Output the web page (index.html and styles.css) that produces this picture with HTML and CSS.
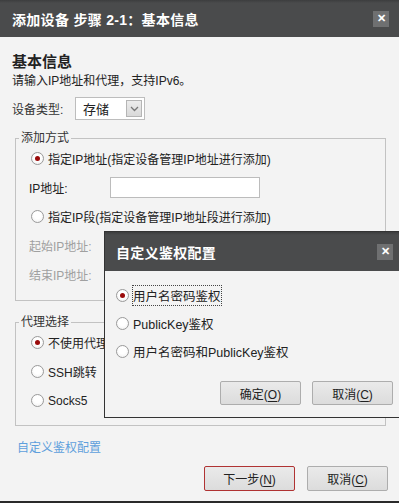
FILE: index.html
```html
<!DOCTYPE html>
<html lang="zh-CN">
<head>
<meta charset="utf-8">
<title>添加设备</title>
<link rel="stylesheet" href="styles.css">
</head>
<body>
<div class="dialog">
  <div class="titlebar">
    <span class="title">添加设备 步骤 2-1：基本信息</span>
    <span class="close">&#x2715;</span>
  </div>
  <div class="content">
    <h1 class="heading">基本信息</h1>
    <p class="desc">请输入IP地址和代理，支持IPv6。</p>
    <div class="type-row">
      <span class="type-label">设备类型:</span>
      <div class="select">
        <span class="select-text">存储</span>
        <span class="select-btn"><svg width="9" height="6" viewBox="0 0 9 6"><path d="M1 1 L4.5 4.5 L8 1" fill="none" stroke="#777" stroke-width="1.3"/></svg></span>
      </div>
    </div>
    <fieldset class="group g1">
      <legend>添加方式</legend>
      <div class="row"><span class="radio checked"></span><span class="rtext">指定IP地址(指定设备管理IP地址进行添加)</span></div>
      <div class="row sub"><span class="lbl">IP地址:</span><span class="input"></span></div>
      <div class="row"><span class="radio"></span><span class="rtext">指定IP段(指定设备管理IP地址段进行添加)</span></div>
      <div class="row sub disabled"><span class="lbl">起始IP地址:</span></div>
      <div class="row sub disabled"><span class="lbl">结束IP地址:</span></div>
    </fieldset>
    <fieldset class="group g2">
      <legend>代理选择</legend>
      <div class="row"><span class="radio checked"></span><span class="rtext">不使用代理</span></div>
      <div class="row"><span class="radio"></span><span class="rtext">SSH跳转</span></div>
      <div class="row"><span class="radio"></span><span class="rtext">Socks5</span></div>
    </fieldset>
    <a class="link">自定义鉴权配置</a>
    <div class="actions">
      <button class="btn primary w90">下一步(<u>N</u>)</button>
      <button class="btn w80">取消(<u>C</u>)</button>
    </div>
  </div>

  <div class="modal">
    <div class="titlebar modal-bar">
      <span class="title">自定义鉴权配置</span>
      <span class="close">&#x2715;</span>
    </div>
    <div class="modal-body">
      <div class="mrow"><span class="radio checked"></span><span class="rtext focus">用户名密码鉴权</span></div>
      <div class="mrow"><span class="radio"></span><span class="rtext">PublicKey鉴权</span></div>
      <div class="mrow"><span class="radio"></span><span class="rtext">用户名密码和PublicKey鉴权</span></div>
      <div class="mactions">
        <button class="btn w80">确定(<u>O</u>)</button>
        <button class="btn w80">取消(<u>C</u>)</button>
      </div>
    </div>
  </div>
</div>
</body>
</html>
```
FILE: styles.css
```css
* { box-sizing: border-box; }
html, body { margin: 0; padding: 0; }
body {
  width: 399px;
  height: 503px;
  overflow: hidden;
  background: #f3f3f3;
  font-family: "Liberation Sans", "Noto Sans CJK SC", sans-serif;
  font-size: 12px;
  color: #222;
}
.dialog {
  position: relative;
  width: 399px;
  height: 503px;
  background: #f3f3f3;
  border-bottom: 2px solid #2a2a2a;
  display: flex;
  flex-direction: column;
}
.titlebar {
  height: 37px;
  flex: none;
  display: flex;
  align-items: center;
  justify-content: space-between;
  padding: 0 10px 0 12px;
  background: linear-gradient(#3c3d3e 0, #4a4b4c 3px, #4a4b4c 100%);
  color: #fff;
}
.title {
  font-size: 14px;
  font-weight: bold;
  letter-spacing: 0.3px;
}
.close {
  width: 16px;
  height: 16px;
  background: #6f7071;
  color: #fff;
  font-size: 11px;
  font-weight: bold;
  display: flex;
  align-items: center;
  justify-content: center;
  line-height: 1;
}
.content {
  flex: 1;
  display: flex;
  flex-direction: column;
  padding: 16px 11px 0 12px;
}
.heading {
  margin: 0;
  font-size: 15px;
  font-weight: bold;
  line-height: 18px;
}
.desc {
  margin: 2px 0 0;
  line-height: 16px;
}
.type-row {
  margin-top: 8px;
  height: 23px;
  display: flex;
  align-items: center;
}
.type-label { width: 63px; color: #333; }
.select {
  width: 70px;
  height: 23px;
  background: #fff;
  border: 1px solid #bdbdbd;
  display: flex;
  align-items: center;
  justify-content: space-between;
  padding: 2px;
}
.select-text { padding-left: 5px; font-size: 13px; }
.select-btn {
  width: 16px;
  height: 17px;
  border: 1px solid #b5b5b5;
  background: linear-gradient(#ececec, #d9d9d9);
  display: flex;
  align-items: center;
  justify-content: center;
}
.group {
  margin: 0 2px 0 3px;
  padding: 0 0 0 0;
  border: 1px solid #c2c2c2;
  min-width: 0;
}
.group legend {
  margin-left: 3px;
  padding: 0 2px;
  line-height: 12px;
  font-size: 12px;
  color: #333;
}
.g1 { margin-top: 12px; padding-bottom: 11px; }
.g2 { margin-top: 15px; padding-bottom: 10px; }
.row {
  height: 29px;
  display: flex;
  align-items: center;
  padding-left: 15px;
}
.row.sub { padding-left: 13px; }
.row.disabled { color: #a0a0a0; }
.lbl { width: 81px; }
.input {
  width: 150px;
  height: 21px;
  background: #fff;
  border: 1px solid #bcbcbc;
}
.radio {
  width: 13px;
  height: 13px;
  flex: none;
  border-radius: 50%;
  border: 1px solid #9a9a9a;
  background: radial-gradient(circle at 50% 40%, #fff 40%, #ececec 100%);
  margin-right: 4px;
  display: flex;
  align-items: center;
  justify-content: center;
}
.radio.checked::after {
  content: "";
  width: 5px;
  height: 5px;
  border-radius: 50%;
  background: #9a0a0a;
}
.rtext { white-space: nowrap; }
.link {
  margin: 14px 0 0 5px;
  line-height: 16px;
  color: #5e9fdc;
  cursor: pointer;
}
.actions {
  margin-top: 10px;
  display: flex;
  justify-content: flex-end;
  gap: 12px;
}
.btn {
  height: 25px;
  border: 1px solid #adadad;
  border-radius: 2px;
  background: linear-gradient(#eaeaea, #dcdcdc);
  font-family: inherit;
  font-size: 12px;
  color: #222;
  padding: 0;
}
.btn u { text-underline-offset: 2px; }
.btn.primary { border-color: #b03333; }
.w90 { width: 91px; }
.w80 { width: 81px; }

.modal {
  position: absolute;
  left: 104px;
  top: 231px;
  width: 297px;
  height: 187px;
  border: 1px solid #333;
  background: #f3f3f3;
  display: flex;
  flex-direction: column;
}
.modal-bar {
  height: 39px;
  padding: 0 7px 0 11px;
}
.modal-body {
  flex: 1;
  padding: 10px 7px 0 11px;
  display: flex;
  flex-direction: column;
}
.mrow {
  height: 28px;
  display: flex;
  align-items: center;
}
.mrow .rtext { font-size: 12.5px; }
.focus { outline: 1px dotted #444; outline-offset: 0; }
.mactions {
  margin-top: 16px;
  display: flex;
  justify-content: flex-end;
  gap: 11px;
}
.mactions .btn { height: 24px; }
```
